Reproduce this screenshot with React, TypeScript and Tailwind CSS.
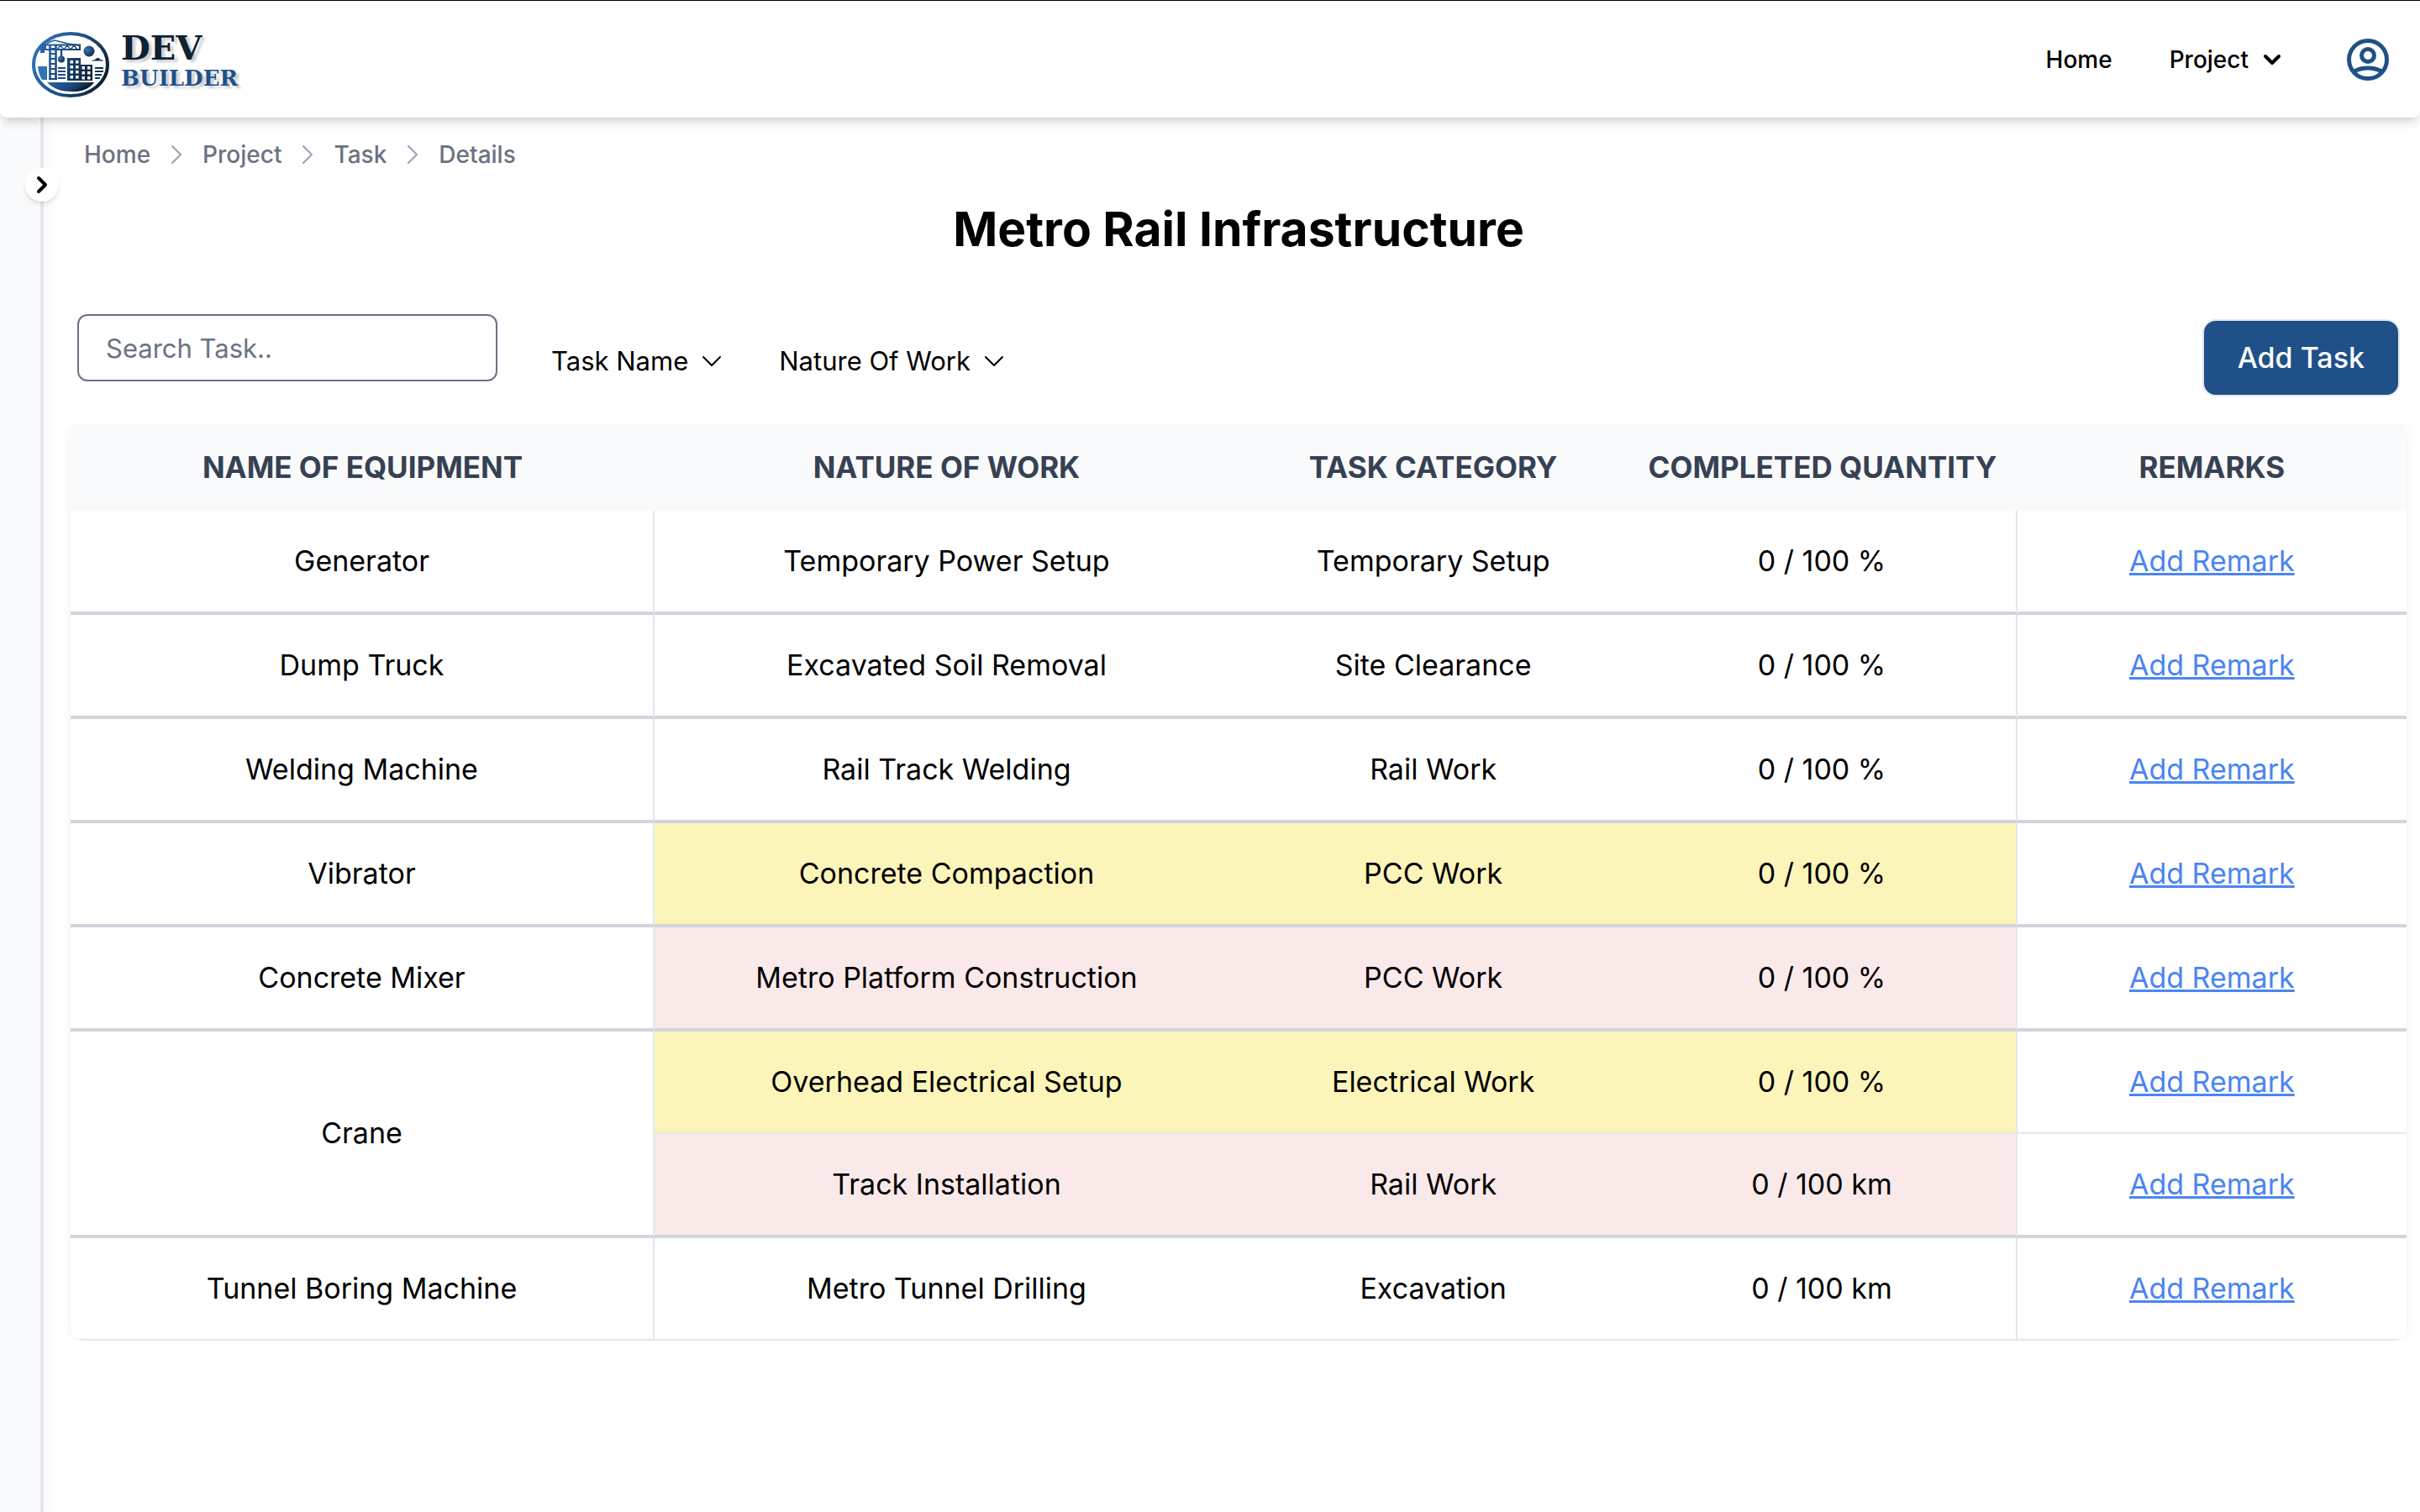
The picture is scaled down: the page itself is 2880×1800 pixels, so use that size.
type Tone = "none" | "yellow" | "red";
type Task = { nature: string; category: string; quantity: string; tone: Tone };
type Equipment = { name: string; tasks: Task[] };

const EQUIPMENT: Equipment[] = [
  { name: "Generator", tasks: [{ nature: "Temporary Power Setup", category: "Temporary Setup", quantity: "0 / 100 %", tone: "none" }] },
  { name: "Dump Truck", tasks: [{ nature: "Excavated Soil Removal", category: "Site Clearance", quantity: "0 / 100 %", tone: "none" }] },
  { name: "Welding Machine", tasks: [{ nature: "Rail Track Welding", category: "Rail Work", quantity: "0 / 100 %", tone: "none" }] },
  { name: "Vibrator", tasks: [{ nature: "Concrete Compaction", category: "PCC Work", quantity: "0 / 100 %", tone: "yellow" }] },
  { name: "Concrete Mixer", tasks: [{ nature: "Metro Platform Construction", category: "PCC Work", quantity: "0 / 100 %", tone: "red" }] },
  {
    name: "Crane",
    tasks: [
      { nature: "Overhead Electrical Setup", category: "Electrical Work", quantity: "0 / 100 %", tone: "yellow" },
      { nature: "Track Installation", category: "Rail Work", quantity: "0 / 100 km", tone: "red" },
    ],
  },
  { name: "Tunnel Boring Machine", tasks: [{ nature: "Metro Tunnel Drilling", category: "Excavation", quantity: "0 / 100 km", tone: "none" }] },
];

const TONES: Record<Tone, string> = {
  none: "bg-white",
  yellow: "bg-[#fcf5ba]",
  red: "bg-[#f9e9e9]",
};

const CRUMBS = ["Home", "Project", "Task", "Details"];

function Chevron({ className, d, box, width }: { className: string; d: string; box: string; width: number }) {
  return (
    <svg className={className} viewBox={box} fill="none" stroke="currentColor" strokeWidth={width} strokeLinecap="round" strokeLinejoin="round" aria-hidden="true">
      <path d={d} />
    </svg>
  );
}

function Logo() {
  return (
    <a href="#" aria-label="Dev Builder" className="flex items-start gap-3 pt-3">
      <svg className="h-20 w-24 shrink-0" viewBox="0 0 96 80" aria-hidden="true">
        <defs>
          <linearGradient id="ring" x1="0" y1="0.3" x2="1" y2="0.7">
            <stop offset="0" stopColor="#2f73b8" />
            <stop offset="0.5" stopColor="#1f4f87" />
            <stop offset="1" stopColor="#0c1f2f" />
          </linearGradient>
          <linearGradient id="ground" x1="0" y1="0" x2="1" y2="0.3">
            <stop offset="0" stopColor="#2a68aa" />
            <stop offset="0.55" stopColor="#1c4a80" />
            <stop offset="1" stopColor="#0c1f2f" />
          </linearGradient>
          <linearGradient id="steel" gradientUnits="userSpaceOnUse" x1="10" y1="20" x2="76" y2="60">
            <stop offset="0" stopColor="#2a68aa" />
            <stop offset="0.5" stopColor="#1b4470" />
            <stop offset="1" stopColor="#0b1c2b" />
          </linearGradient>
          <radialGradient id="moon" cx="0.35" cy="0.35" r="0.7">
            <stop offset="0" stopColor="#3a78bb" />
            <stop offset="1" stopColor="#0e2b4d" />
          </radialGradient>
        </defs>
        <ellipse cx="48" cy="40" rx="44" ry="37" fill="#fff" stroke="url(#ring)" strokeWidth="4" />
        <path d="M20 61h56C70 69 60 72 49 72S27 69 20 61Z" fill="url(#ground)" />
        <path d="M49 72c10-3 18-6 24-11h3C70 69 62 72 49 72Z" fill="#0c1f2f" />
        <path d="M9 42h11v16h-6Q10 52 9 42Z" fill="#2f73b8" />
        <g stroke="url(#steel)" fill="none">
          <path d="M23.500 16v42M30.500 16v42" strokeWidth="2.6" />
          <path d="M23.500 21h7M23.500 27h7M23.500 33h7M23.500 39h7M23.500 45h7M23.500 51h7M22 57h10" strokeWidth="2" />
          <path d="M13 21L23 13L29 11L45 15L59 17" strokeWidth="1.6" />
          <path d="M14 16.500h45M14 22h45M59 15.500v7.500" strokeWidth="2" />
          <path d="M32 22l4-5 4 5 4-5 4 5 4-5 4 5" strokeWidth="1.4" />
          <path d="M37 23v9" strokeWidth="2.4" />
        </g>
        <path d="M12 17h7v4h-2v5h-5Z" fill="url(#steel)" />
        <circle cx="37" cy="33.500" r="4" fill="url(#moon)" />
        <circle cx="70" cy="24" r="6.500" fill="url(#moon)" />
        <path d="M73 35.500c1-1.500 4-.5 5-2.500 2-2 5-1 5 1 2 0 4 .5 4 1.500Z" fill="#0e2b4d" />
        <path d="M44 32h16v8h14v19H44Z" fill="url(#steel)" />
        <g fill="#fff">
          {[35, 41, 47, 53].map((y) => (
            <g key={y}>
              <rect x="47.500" y={y} width="3.500" height="3.500" />
              <rect x="54" y={y} width="3.500" height="3.500" />
            </g>
          ))}
          {[42, 48, 54].map((y) => (
            <g key={y}>
              <rect x="61.500" y={y} width="3.500" height="3.500" />
              <rect x="68" y={y} width="3.500" height="3.500" />
            </g>
          ))}
        </g>
        <path d="M33 44h9M33 48h9M33 52h9M33 56h9" stroke="#1c4a80" strokeWidth="1.8" />
        <path d="M77 44h10M77 48h10M77 52h8M77 56h6" stroke="#12304f" strokeWidth="1.8" />
      </svg>
      <span className="flex flex-col font-['DejaVu_Serif',serif] font-bold [text-shadow:4px_3px_3px_rgb(0_0_0/0.2)]">
        <span className="text-[40px] leading-10 text-[#0d2233]">DEV</span>
        <span className="text-[26px] leading-8 text-[#1f5189]">BUILDER</span>
      </span>
    </a>
  );
}

function ProfileIcon() {
  return (
    <svg className="size-15" viewBox="0 0 24 24" fill="none" stroke="currentColor" strokeWidth="2" aria-hidden="true">
      <circle cx="12" cy="12" r="9" />
      <circle cx="12" cy="10" r="3" />
      <path d="M5.600 17.600C9 15.500 15 15.500 18.400 17.600" />
    </svg>
  );
}

export default function App() {
  return (
    <div className="flex min-h-screen flex-col bg-white font-['Inter',sans-serif] text-black">
      <header className="relative z-10 flex h-[140px] items-center justify-between rounded-b-lg border-t border-black bg-white pr-8 pl-9 shadow-[0_8px_12px_-2px_rgb(0_0_0/0.12),0_4px_8px_-4px_rgb(0_0_0/0.12)]">
        <Logo />
        <nav className="flex items-center text-[28px] leading-10 font-medium">
          <a href="#">Home</a>
          <button type="button" className="ml-17 flex items-center gap-4">
            Project
            <Chevron className="size-6" box="0 0 24 24" d="M4 8l8 8 8-8" width={4} />
          </button>
          <button type="button" aria-label="Profile" className="ml-18 text-[#1f5087]">
            <ProfileIcon />
          </button>
        </nav>
      </header>

      <div className="flex flex-1">
        <aside className="relative flex w-[52px] shrink-0 border-r-4 border-gray-200 shadow-[4px_0_16px_rgb(0_0_0/0.04)]">
          <div className="flex-1 rounded-t-2xl bg-gray-50" />
          <button type="button" aria-label="Expand sidebar" className="absolute top-15 -right-[22px] flex size-10 items-center justify-center rounded-full bg-white shadow-md">
            <Chevron className="size-6" box="0 0 24 24" d="M8 4l8 8-8 8" width={4} />
          </button>
        </aside>

        <main className="flex min-w-0 flex-1 flex-col pr-4 pl-8">
          <nav aria-label="Breadcrumb" className="mt-6 pl-4">
            <ol className="flex items-center gap-[25px] text-[28px] leading-10 font-medium text-gray-500">
              {CRUMBS.map((name, i) => (
                <li key={name} className="flex items-center gap-[25px]">
                  {i > 0 && <Chevron className="h-6 w-3 text-gray-400" box="0 0 12 24" d="M1 2l10 10L1 22" width={2} />}
                  <a href="#">{name}</a>
                </li>
              ))}
            </ol>
          </nav>

          <h1 className="mt-8 text-center text-[57px] leading-[74px] font-bold">Metro Rail Infrastructure</h1>

          <div className="mt-16 flex items-start px-2">
            <input
              type="text"
              aria-label="Search Task"
              placeholder="Search Task.."
              className="h-20 w-[500px] rounded-xl border-2 border-gray-500 px-8 text-[31px] leading-10 placeholder:text-gray-500"
            />
            <button type="button" className="mt-8 ml-16 flex items-center gap-4 text-[31px] leading-12">
              Task Name
              <Chevron className="size-6" box="0 0 24 24" d="M2 7l10 10 10-10" width={2} />
            </button>
            <button type="button" className="mt-8 ml-17 flex items-center gap-4 text-[31px] leading-12">
              Nature Of Work
              <Chevron className="size-6" box="0 0 24 24" d="M2 7l10 10 10-10" width={2} />
            </button>
            <button type="button" className="mt-[6px] ml-auto rounded-2xl border-2 border-gray-200 bg-[#1f5087] px-10 text-[34px] leading-[88px] font-medium text-white">
              Add Task
            </button>
          </div>

          <div className="mt-8 rounded-2xl shadow-[0_0_12px_rgb(0_0_0/0.07)] [clip-path:inset(0_-16px_0_-16px)]">
            <div className="overflow-hidden rounded-2xl">
              <table className="w-full table-fixed border-separate border-spacing-0 bg-white text-center text-[34px] leading-14">
                <thead className="text-[35px]">
                  <tr className="bg-gray-50 text-gray-700 uppercase">
                    <th scope="col" className="w-3/12 py-6 font-bold">Name of Equipment</th>
                    <th scope="col" className="w-3/12 py-6 font-bold">Nature of Work</th>
                    <th scope="col" className="w-2/12 py-6 font-bold">Task Category</th>
                    <th scope="col" className="w-2/12 py-6 font-bold whitespace-nowrap">Completed Quantity</th>
                    <th scope="col" className="w-2/12 py-6 font-bold">Remarks</th>
                  </tr>
                </thead>
                <tbody>
                  {EQUIPMENT.map((item, g) => {
                    const groupEnd = g === EQUIPMENT.length - 1 ? "border-b-2 border-b-gray-200" : "border-b-4 border-b-gray-300";
                    return item.tasks.map((task, i) => {
                      const line = i === item.tasks.length - 1 ? groupEnd : "border-b-2 border-b-gray-200";
                      return (
                        <tr key={task.nature}>
                          {i === 0 && (
                            <th scope="row" rowSpan={item.tasks.length} className={`border-r-2 border-r-gray-200 py-8 font-normal ${groupEnd}`}>
                              {item.name}
                            </th>
                          )}
                          <td className={`py-8 ${TONES[task.tone]} ${line}`}>{task.nature}</td>
                          <td className={`py-8 ${TONES[task.tone]} ${line}`}>{task.category}</td>
                          <td className={`border-r-2 border-r-gray-200 py-8 ${TONES[task.tone]} ${line}`}>{task.quantity}</td>
                          <td className={`py-8 ${line}`}>
                            <a href="#" className="text-[#4b85f2] underline decoration-3">Add Remark</a>
                          </td>
                        </tr>
                      );
                    });
                  })}
                </tbody>
              </table>
            </div>
          </div>
        </main>
      </div>
    </div>
  );
}
